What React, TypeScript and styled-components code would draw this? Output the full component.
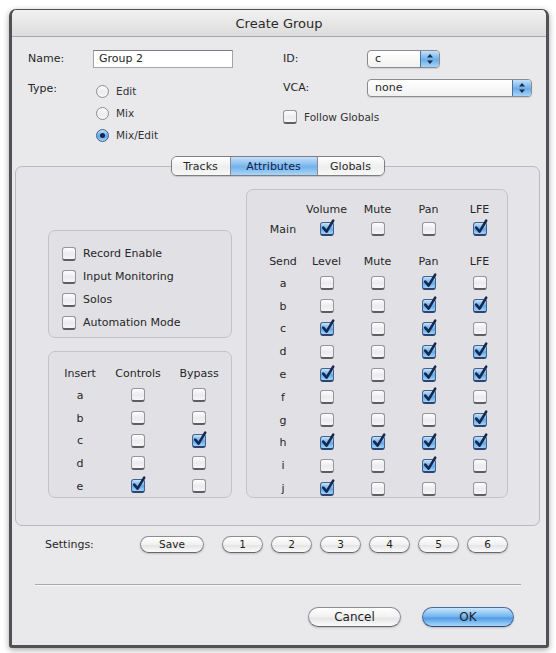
import React from 'react';
import styled, { createGlobalStyle } from 'styled-components';

const GlobalStyle = createGlobalStyle`
  html, body {
    margin: 0;
    padding: 0;
    background: #ffffff;
  }
  body {
    font-family: "DejaVu Sans", "Liberation Sans", sans-serif;
    font-size: 11px;
    color: #262626;
  }
`;

const Page = styled.div`
  width: 556px;
  height: 653px;
  box-sizing: border-box;
  padding: 9px 7px 5px 9px;
`;

const Window = styled.div`
  width: 540px;
  height: 639px;
  box-sizing: border-box;
  display: flex;
  flex-direction: column;
  border: 3px solid #515154;
  border-top-width: 1px;
  border-radius: 7px 7px 3px 3px;
  background: #e9e9ec;
  box-shadow: 0 2px 6px rgba(0, 0, 0, 0.35);
  overflow: hidden;
`;

const TitleBar = styled.div`
  height: 26px;
  flex: none;
  display: flex;
  align-items: center;
  justify-content: center;
  background: linear-gradient(#f2f2f2, #dcdcdc);
  border-bottom: 1px solid #a9a9ad;
  font-size: 13px;
  color: #2a2a2a;
`;

const Body = styled.div`
  flex: 1;
  display: flex;
  flex-direction: column;
`;

/* top form */

const TopForm = styled.div`
  display: flex;
  padding: 12px 0 0 16px;
`;

const FormColumn = styled.div<{ $width?: number }>`
  display: flex;
  flex-direction: column;
  width: ${p => (p.$width ? `${p.$width}px` : 'auto')};
  flex: ${p => (p.$width ? 'none' : '1')};
`;

const FormRow = styled.div<{ $gap?: number }>`
  display: flex;
  align-items: flex-start;
  margin-top: ${p => p.$gap ?? 0}px;
`;

const FieldLabel = styled.div<{ $width: number }>`
  width: ${p => p.$width}px;
  flex: none;
  height: 18px;
  line-height: 18px;
`;

const TextField = styled.div`
  width: 140px;
  height: 18px;
  box-sizing: border-box;
  padding-left: 5px;
  line-height: 16px;
  background: #ffffff;
  border: 1px solid #a4a4a8;
  border-top-color: #7c7c80;
`;

const Popup = styled.div<{ $width: number }>`
  width: ${p => p.$width}px;
  height: 18px;
  box-sizing: border-box;
  display: flex;
  border: 1px solid #8a8a90;
  border-radius: 4px;
  background: linear-gradient(#ffffff, #f1f1f1);
  box-shadow: 0 1px 1px rgba(0, 0, 0, 0.12);
  overflow: hidden;
`;

const PopupValue = styled.div`
  flex: 1;
  padding-left: 7px;
  line-height: 16px;
`;

const PopupArrows = styled.div`
  width: 18px;
  display: flex;
  align-items: center;
  justify-content: center;
  border-left: 1px solid #4f6f9c;
  background: linear-gradient(#c3e1fa, #6aade8 55%, #a6d4f8);
`;

const RadioList = styled.div`
  display: flex;
  flex-direction: column;
  margin-top: -11px;
`;

const OptionRow = styled.div`
  height: 22px;
  display: flex;
  align-items: center;
  gap: 7px;
`;

const Radio = styled.span<{ $on?: boolean }>`
  width: 13px;
  height: 13px;
  box-sizing: border-box;
  margin-left: 3px;
  border-radius: 50%;
  display: flex;
  align-items: center;
  justify-content: center;
  border: 1px solid ${p => (p.$on ? '#42618f' : '#8e8e92')};
  background: ${p =>
    p.$on
      ? 'linear-gradient(#c2e0fa, #5fa6e6 55%, #a2d2f8)'
      : 'linear-gradient(#fdfdfd, #ececec 55%, #f8f8f8)'};

  &::after {
    content: '';
    display: ${p => (p.$on ? 'block' : 'none')};
    width: 5px;
    height: 5px;
    border-radius: 50%;
    background: #16264a;
  }
`;

const SmallText = styled.span`
  font-size: 10.5px;
  color: #333;
`;

/* checkbox */

const Box = styled.span<{ $on?: boolean }>`
  position: relative;
  display: inline-block;
  flex: none;
  width: 14px;
  height: 14px;
  box-sizing: border-box;
  border-radius: 3px;
  border: 1px solid ${p => (p.$on ? '#43618e' : '#95959a')};
  border-bottom: 2px solid ${p => (p.$on ? '#2b4470' : '#5d5d62')};
  background: ${p =>
    p.$on
      ? 'linear-gradient(#c6e3fb, #62a9e8 55%, #a3d3f8)'
      : 'linear-gradient(#fefefe, #ebebee 55%, #f7f7f9)'};
`;

const Tick = styled.svg`
  position: absolute;
  left: 0;
  top: -4px;
  overflow: visible;
`;

const Check = ({ on }: { on?: boolean }) => (
  <Box $on={on}>
    {on && (
      <Tick width="14" height="15" viewBox="0 0 14 15">
        <path d="M2.2 8.6 L5.6 12.6 L12.2 1.6" fill="none" stroke="#17284e" strokeWidth="2.6" strokeLinecap="round" strokeLinejoin="round" />
      </Tick>
    )}
  </Box>
);

/* tabs and panes */

const Pane = styled.div`
  margin: 20px 6px 0 3px;
  height: 360px;
  box-sizing: border-box;
  border: 1px solid #b9b9be;
  border-radius: 7px;
  background: #e5e5e9;
  display: flex;
  flex-direction: column;
`;

const Tabs = styled.div`
  align-self: center;
  margin-top: -11px;
  height: 20px;
  box-sizing: border-box;
  display: flex;
  border: 1px solid #7d7d82;
  border-radius: 6px;
  overflow: hidden;
  box-shadow: 0 1px 1px rgba(0, 0, 0, 0.15);
`;

const Tab = styled.div<{ $active?: boolean; $width: number }>`
  width: ${p => p.$width}px;
  display: flex;
  align-items: center;
  justify-content: center;
  color: ${p => (p.$active ? '#10224a' : '#2a2a2a')};
  background: ${p =>
    p.$active
      ? 'linear-gradient(#c4e1fa, #73b3ec 55%, #a9d6f9)'
      : 'linear-gradient(#ffffff, #eeeeee 55%, #f8f8f8)'};
  & + & {
    border-left: 1px solid #8a8a90;
  }
`;

const PaneContent = styled.div`
  display: flex;
  align-items: flex-end;
  gap: 14px;
  padding: 13px 31px 0 32px;
`;

const LeftColumn = styled.div`
  width: 184px;
  display: flex;
  flex-direction: column;
  gap: 13px;
`;

const GroupBox = styled.div<{ $height: number }>`
  height: ${p => p.$height}px;
  box-sizing: border-box;
  border: 1px solid #c3c3c8;
  border-radius: 7px;
  background: #e1e1e5;
`;

const OptionList = styled.div`
  display: flex;
  flex-direction: column;
  padding: 11px 0 0 13px;
`;

const OptionItem = styled.div`
  height: 23px;
  display: flex;
  align-items: center;
  gap: 7px;
`;

const Grid = styled.div<{ $cols: string; $pad: string }>`
  display: grid;
  grid-template-columns: ${p => p.$cols};
  padding: ${p => p.$pad};
  justify-items: center;
  align-items: center;
`;

const Cell = styled.div<{ $h: number }>`
  height: ${p => p.$h}px;
  display: flex;
  align-items: center;
  justify-content: center;
  white-space: nowrap;
`;

const Spacer = styled.div<{ $h: number }>`
  grid-column: 1 / -1;
  height: ${p => p.$h}px;
`;

/* bottom */

const SettingsRow = styled.div`
  display: flex;
  align-items: center;
  margin-top: 9px;
  padding-left: 33px;
  height: 18px;
`;

const SettingsLabel = styled.div`
  width: 95px;
`;

const PillButton = styled.div<{ $width: number; $primary?: boolean; $h?: number; $mr?: number }>`
  width: ${p => p.$width}px;
  height: ${p => p.$h ?? 17}px;
  box-sizing: border-box;
  margin-right: ${p => p.$mr ?? 0}px;
  display: flex;
  align-items: center;
  justify-content: center;
  border-radius: 10px;
  border: 1px solid ${p => (p.$primary ? '#4a6c9c' : '#8c8c92')};
  border-bottom-color: ${p => (p.$primary ? '#2e4a78' : '#66666b')};
  background: ${p =>
    p.$primary
      ? 'linear-gradient(#cbe6fc, #6db2ee 50%, #4f9ae4 55%, #a9d8fb)'
      : 'linear-gradient(#ffffff, #f1f1f1 50%, #e4e4e6 55%, #fbfbfb)'};
  box-shadow: 0 1px 2px rgba(0, 0, 0, 0.18);
  font-size: ${p => (p.$h ? 12 : 10.5)}px;
  color: #1e1e1e;
`;

const Digits = styled.div`
  display: flex;
  gap: 8px;
`;

const Separator = styled.div`
  margin: 31px 0 0 23px;
  width: 486px;
  height: 1px;
  background: #a6a6ab;
  border-bottom: 1px solid #f7f7f9;
`;

const ButtonRow = styled.div`
  display: flex;
  justify-content: flex-end;
  gap: 21px;
  margin-top: 21px;
  padding-right: 32px;
`;

const Arrows = () => (
  <svg width="8" height="12" viewBox="0 0 8 12">
    <path d="M4 1 L7 4.6 L1 4.6 Z" fill="#1b2a4c" />
    <path d="M4 11 L7 7.4 L1 7.4 Z" fill="#1b2a4c" />
  </svg>
);

const mainRow = [true, false, false, true];
const sends: [string, boolean[]][] = [
  ['a', [false, false, true, false]],
  ['b', [false, false, true, true]],
  ['c', [true, false, true, false]],
  ['d', [false, false, true, true]],
  ['e', [true, false, true, true]],
  ['f', [false, false, true, false]],
  ['g', [false, false, false, true]],
  ['h', [true, true, true, true]],
  ['i', [false, false, true, false]],
  ['j', [true, false, false, false]],
];
const inserts: [string, boolean, boolean][] = [
  ['a', false, false],
  ['b', false, false],
  ['c', false, true],
  ['d', false, false],
  ['e', true, false],
];
const attributes = ['Record Enable', 'Input Monitoring', 'Solos', 'Automation Mode'];

const App = () => (
  <Page>
    <GlobalStyle />
    <Window>
      <TitleBar>Create Group</TitleBar>
      <Body>
        <TopForm>
          <FormColumn $width={255}>
            <FormRow $gap={1}>
              <FieldLabel $width={65}>Name:</FieldLabel>
              <TextField>Group 2</TextField>
            </FormRow>
            <FormRow $gap={12}>
              <FieldLabel $width={65}>Type:</FieldLabel>
              <RadioList>
                <OptionRow style={{ marginTop: 11 }}><Radio /><SmallText>Edit</SmallText></OptionRow>
                <OptionRow><Radio /><SmallText>Mix</SmallText></OptionRow>
                <OptionRow><Radio $on /><SmallText>Mix/Edit</SmallText></OptionRow>
              </RadioList>
            </FormRow>
          </FormColumn>
          <FormColumn>
            <FormRow $gap={1}>
              <FieldLabel $width={84}>ID:</FieldLabel>
              <Popup $width={73}>
                <PopupValue>c</PopupValue>
                <PopupArrows><Arrows /></PopupArrows>
              </Popup>
            </FormRow>
            <FormRow $gap={11}>
              <FieldLabel $width={84}>VCA:</FieldLabel>
              <Popup $width={165}>
                <PopupValue>none</PopupValue>
                <PopupArrows><Arrows /></PopupArrows>
              </Popup>
            </FormRow>
            <FormRow $gap={11}>
              <OptionRow style={{ height: 18 }}>
                <Check />
                <SmallText>Follow Globals</SmallText>
              </OptionRow>
            </FormRow>
          </FormColumn>
        </TopForm>

        <Pane>
          <Tabs>
            <Tab $width={58}>Tracks</Tab>
            <Tab $width={86} $active>Attributes</Tab>
            <Tab $width={66}>Globals</Tab>
          </Tabs>
          <PaneContent>
            <LeftColumn>
              <GroupBox $height={108}>
                <OptionList>
                  {attributes.map(a => (
                    <OptionItem key={a}>
                      <Check />
                      <span>{a}</span>
                    </OptionItem>
                  ))}
                </OptionList>
              </GroupBox>
              <GroupBox $height={147}>
                <Grid $cols="62px 54px 68px" $pad="11px 0 0 0">
                  <Cell $h={20}>Insert</Cell>
                  <Cell $h={20}>Controls</Cell>
                  <Cell $h={20}>Bypass</Cell>
                  <Spacer $h={1} />
                  {inserts.map(([k, c, b]) => (
                    <React.Fragment key={k}>
                      <Cell $h={22.7}>{k}</Cell>
                      <Cell $h={22.7}><Check on={c} /></Cell>
                      <Cell $h={22.7}><Check on={b} /></Cell>
                    </React.Fragment>
                  ))}
                </Grid>
              </GroupBox>
            </LeftColumn>
            <GroupBox $height={309} style={{ width: 262 }}>
              <Grid $cols="36px repeat(4, 51px)" $pad="9px 0 0 18px">
                <Cell $h={20} />
                <Cell $h={20}>Volume</Cell>
                <Cell $h={20}>Mute</Cell>
                <Cell $h={20}>Pan</Cell>
                <Cell $h={20}>LFE</Cell>
                <Cell $h={20}>Main</Cell>
                {mainRow.map((on, i) => (
                  <Cell $h={20} key={i}><Check on={on} /></Cell>
                ))}
                <Spacer $h={11} />
                <Cell $h={22}>Send</Cell>
                <Cell $h={22}>Level</Cell>
                <Cell $h={22}>Mute</Cell>
                <Cell $h={22}>Pan</Cell>
                <Cell $h={22}>LFE</Cell>
                {sends.map(([k, vals]) => (
                  <React.Fragment key={k}>
                    <Cell $h={22.8}>{k}</Cell>
                    {vals.map((on, i) => (
                      <Cell $h={22.8} key={i}><Check on={on} /></Cell>
                    ))}
                  </React.Fragment>
                ))}
              </Grid>
            </GroupBox>
          </PaneContent>
        </Pane>

        <SettingsRow>
          <SettingsLabel>Settings:</SettingsLabel>
          <PillButton $width={64} $mr={18}>Save</PillButton>
          <Digits>
            {['1', '2', '3', '4', '5', '6'].map(d => (
              <PillButton $width={41} key={d}>{d}</PillButton>
            ))}
          </Digits>
        </SettingsRow>

        <Separator />

        <ButtonRow>
          <PillButton $width={93} $h={20}>Cancel</PillButton>
          <PillButton $width={92} $h={20} $primary>OK</PillButton>
        </ButtonRow>
      </Body>
    </Window>
  </Page>
);

export default App;
